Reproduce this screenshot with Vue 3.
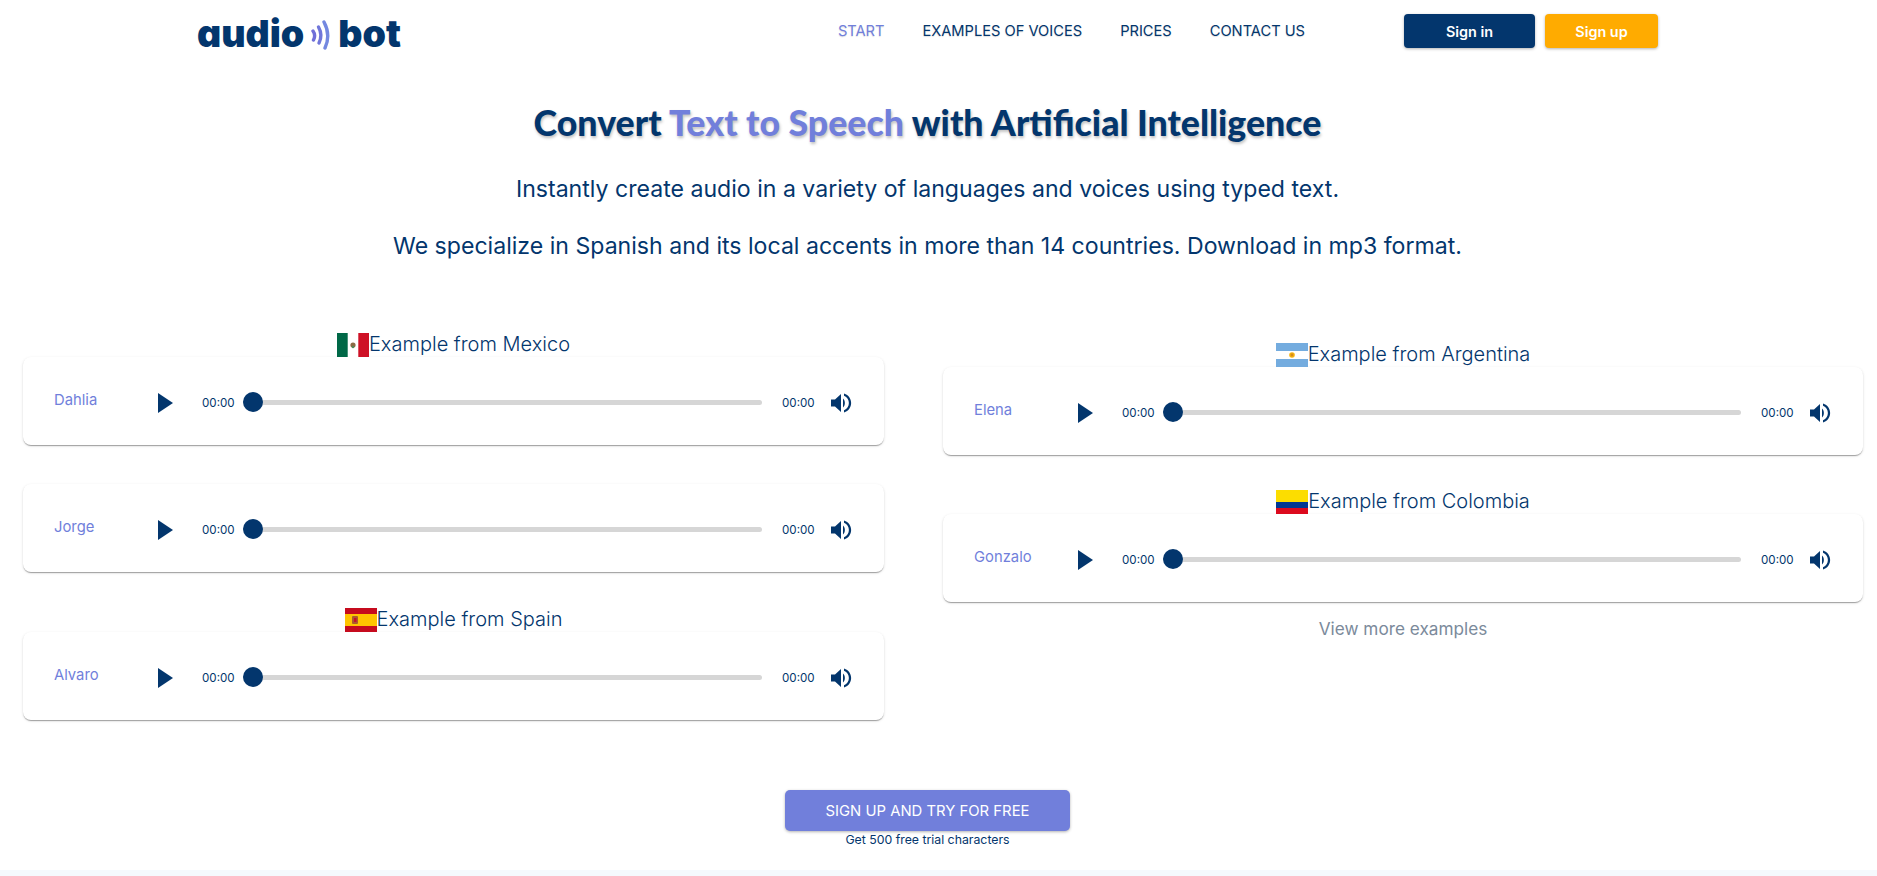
<script setup>
const leftColumn = [
  { title: "Example from Mexico", flag: "mx", voice: "Dahlia" },
  { voice: "Jorge" },
  { title: "Example from Spain", flag: "es", voice: "Alvaro" },
];

const rightColumn = [
  { title: "Example from Argentina", flag: "ar", voice: "Elena" },
  { title: "Example from Colombia", flag: "co", voice: "Gonzalo" },
];

const columns = [
  { id: "left", items: leftColumn },
  { id: "right", items: rightColumn },
];

const navLinks = ["START", "EXAMPLES OF VOICES", "PRICES", "CONTACT US"];
</script>

<template>
  <div class="page">
    <header class="header">
      <a class="logo">
        <span>audio</span>
        <svg class="waves" width="20" height="30" viewBox="0 0 20 30" fill="none" stroke-linecap="round">
          <path d="M2 11 Q5 15 2.5 20" stroke="#6f6fd8" stroke-width="3.4" />
          <path d="M7.5 7 Q12 15 8 23" stroke="#7076da" stroke-width="3.4" />
          <path d="M13 2 Q20 15 14 28" stroke="#7488e0" stroke-width="3.4" />
        </svg>
        <span class="logo-bot">bot</span>
      </a>
      <nav class="nav">
        <a v-for="(link, i) in navLinks" :key="link" :class="{ active: i === 0 }">{{ link }}</a>
      </nav>
      <div class="auth">
        <button class="btn signin">Sign in</button>
        <button class="btn signup">Sign up</button>
      </div>
    </header>

    <section class="hero">
      <h1>Convert <span>Text to Speech</span> with Artificial Intelligence</h1>
      <p>Instantly create audio in a variety of languages and voices using typed text.</p>
      <p>We specialize in Spanish and its local accents in more than 14 countries. Download in mp3 format.</p>
    </section>

    <section class="samples">
      <div v-for="col in columns" :key="col.id" class="col" :class="col.id">
        <div v-for="item in col.items" :key="item.voice" class="sample" :class="{ plain: !item.title }">
          <div v-if="item.title" class="sample-title">
            <svg class="flag" width="32" height="24" viewBox="0 0 32 24">
              <template v-if="item.flag === 'mx'">
                <rect width="32" height="24" fill="#fff" />
                <rect width="10.7" height="24" fill="#006847" />
                <rect x="21.3" width="10.7" height="24" fill="#ce1126" />
                <circle cx="16" cy="12" r="2.6" fill="#8c6a45" />
                <circle cx="16" cy="14" r="1.2" fill="#4f8a5a" />
              </template>
              <template v-else-if="item.flag === 'es'">
                <rect width="32" height="24" fill="#c60b1e" />
                <rect y="6" width="32" height="12" fill="#ffc400" />
                <rect x="7" y="8" width="6" height="8" rx="1" fill="#ad5b2c" />
                <rect x="9" y="10" width="2.5" height="4" fill="#c8102e" />
              </template>
              <template v-else-if="item.flag === 'ar'">
                <rect width="32" height="24" fill="#74acdf" />
                <rect y="8" width="32" height="8" fill="#fff" />
                <circle cx="16" cy="12" r="2.8" fill="#f6b40e" />
                <circle cx="16" cy="12" r="1.4" fill="#d68a1c" />
              </template>
              <template v-else>
                <rect width="32" height="24" fill="#fcdd00" />
                <rect y="12" width="32" height="6" fill="#003893" />
                <rect y="18" width="32" height="6" fill="#dc0a1e" />
              </template>
            </svg>
            <span>{{ item.title }}</span>
          </div>
          <div class="player">
            <span class="voice">{{ item.voice }}</span>
            <svg class="play" width="15" height="20" viewBox="0 0 15 20">
              <path d="M0 0 L15 10 L0 20 Z" fill="#03366d" />
            </svg>
            <span class="time">00:00</span>
            <div class="slider"><i class="thumb"></i></div>
            <span class="time">00:00</span>
            <svg class="volume" width="21" height="20" viewBox="0 0 21 20">
              <path d="M0 6.5 H4 L10 1 V19 L4 13.500 H0 Z" fill="#03366d" />
              <path d="M12 5.500 C14.500 7.500 14.500 12.500 12 14.500 Z" fill="#03366d" />
              <path d="M13 0.500 C22.500 3.500 22.500 16.500 13 19.500 L13 17.300 C19.500 14.500 19.500 5.500 13 2.700 Z" fill="#03366d" />
            </svg>
          </div>
        </div>
        <a v-if="col.id === 'right'" class="more">View more examples</a>
      </div>
    </section>

    <section class="cta">
      <button class="cta-btn">SIGN UP AND TRY FOR FREE</button>
      <small>Get 500 free trial characters</small>
    </section>

    <footer class="footer"></footer>
  </div>
</template>

<style>
html,
body {
  margin: 0;
  background: #fff;
}
</style>

<style scoped>
.page {
  font-family: Inter, "Liberation Sans", sans-serif;
  color: #03366d;
  height: 876px;
  overflow: hidden;
  display: flex;
  flex-direction: column;
}

.header {
  display: flex;
  align-items: flex-start;
  height: 99px;
  padding: 0 219px 0 197px;
  box-sizing: border-box;
}

.logo {
  display: flex;
  align-items: center;
  height: 68px;
  font-family: Inter, sans-serif;
  font-feature-settings: "cv11" 1;
  font-weight: 900;
  font-size: 37.5px;
  color: #03366d;
  line-height: 1;
}

.waves {
  margin: 2px 7px 0 7px;
}

.nav {
  display: flex;
  gap: 38px;
  margin-left: auto;
  margin-top: 21px;
  font-size: 14.65px;
  line-height: 20px;
  text-shadow: 0 1px 1px rgba(0, 0, 0, 0.12);
}

.nav .active {
  color: #717fdb;
}

.auth {
  display: flex;
  gap: 10px;
  margin-left: 99px;
  margin-top: 14px;
}

.btn {
  height: 34px;
  border: none;
  border-radius: 4px;
  color: #fff;
  font-family: inherit;
  font-size: 14.4px;
  font-weight: 600;
  box-shadow: 0 1px 3px rgba(0, 0, 0, 0.3);
}

.signin {
  width: 131px;
  padding-right: 6px;
  background: #03366d;
}

.signup {
  width: 113px;
  background: #ffab00;
}

.hero {
  text-align: center;
  padding-right: 22px;
}

.hero h1 {
  margin: 0 0 28px;
  font-family: Lato, sans-serif;
  font-weight: 900;
  font-size: 35.7px;
  line-height: 48px;
  text-shadow: 1px 2px 3px rgba(0, 0, 0, 0.25);
}

.hero h1 span {
  color: #717fdb;
}

.hero p {
  margin: 0 0 29px;
  font-size: 23.1px;
  line-height: 28px;
}

.samples {
  display: flex;
  gap: 59px;
  margin: 44px 14px 0 23px;
}

.col {
  display: flex;
  flex-direction: column;
}

.left {
  width: 861px;
  gap: 36px;
}

.left .plain {
  margin-top: 3px;
}

.right {
  flex: 1;
  padding-top: 10px;
  gap: 35px;
}

.sample-title {
  display: flex;
  justify-content: center;
  align-items: flex-start;
  height: 24px;
  font-size: 20px;
  font-weight: 300;
  line-height: 22px;
}

.player {
  display: flex;
  align-items: center;
  height: 88px;
  padding: 3px 32px 0 31px;
  box-sizing: border-box;
  background: #fff;
  border-radius: 8px;
  box-shadow: 0 2px 1px -1px rgba(0, 0, 0, 0.2), 0 1px 1px 0 rgba(0, 0, 0, 0.14), 0 1px 3px 0 rgba(0, 0, 0, 0.12);
}

.voice {
  width: 104px;
  margin-top: -5px;
  font-size: 14.8px;
  color: #717fdb;
}

.play {
  margin-right: 29px;
}

.time {
  width: 31px;
  font-size: 11.6px;
  white-space: nowrap;
}

.slider {
  position: relative;
  flex: 1;
  height: 5px;
  margin: 0 20px 0 10px;
  background: #d6d6d6;
  border-radius: 3px;
}

.thumb {
  position: absolute;
  left: 0;
  top: -8px;
  width: 20px;
  height: 20px;
  border-radius: 50%;
  background: #03366d;
}

.volume {
  margin-left: 18px;
}

.more {
  margin-top: -20px;
  text-align: center;
  font-size: 17.2px;
  line-height: 24px;
  color: #7b8a9b;
}

.cta {
  position: relative;
  display: flex;
  flex-direction: column;
  align-items: center;
  margin-top: auto;
  padding-right: 22px;
  padding-bottom: 22px;
}

.cta-btn {
  width: 285px;
  height: 41px;
  border: none;
  border-radius: 5px;
  background: #717fdb;
  color: #fff;
  font-family: inherit;
  font-size: 14.85px;
  box-shadow: 0 1px 3px rgba(0, 0, 0, 0.3);
}

.cta small {
  margin-top: 0;
  font-size: 12.3px;
  line-height: 17px;
}

.footer {
  height: 6px;
  background: #f5f9fd;
  flex-shrink: 0;
}
</style>
